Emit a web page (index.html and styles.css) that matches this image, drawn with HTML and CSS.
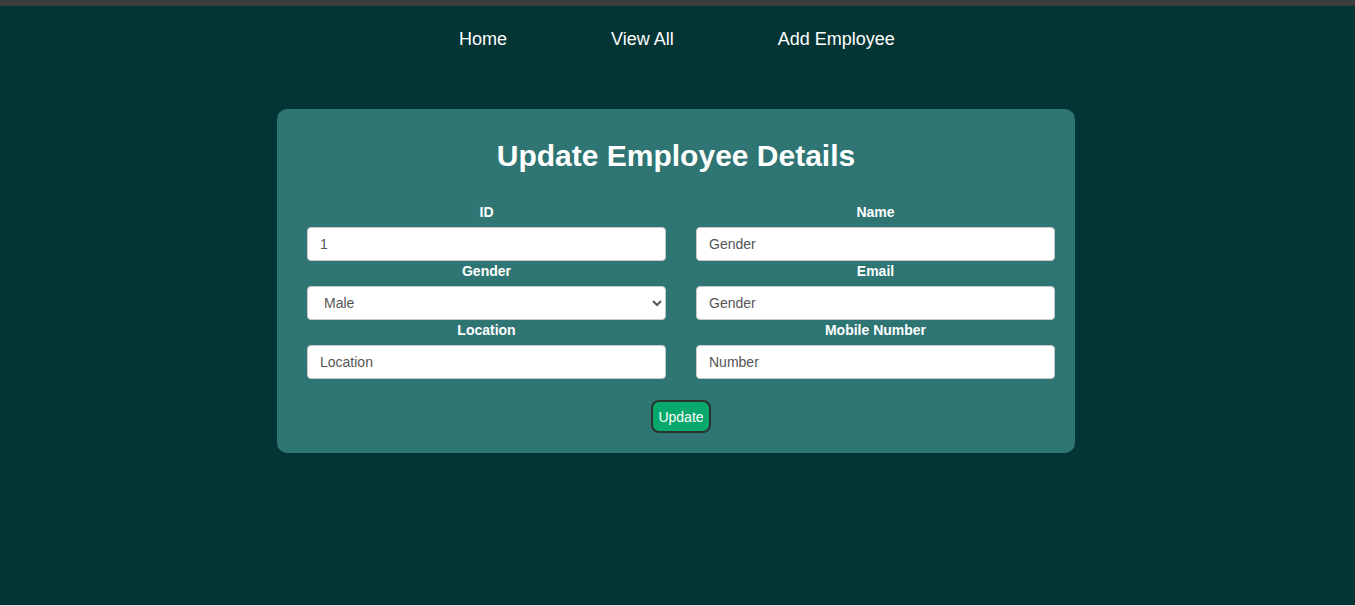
FILE: index.html
```html
<!DOCTYPE html>
<html>
<head>
<meta charset="utf-8">
<link rel="stylesheet" href="styles.css">
</head>
<body>
<div class="topbar"></div>
<div class="page">
  <nav class="nav">
    <a href="#" class="nav-link">Home</a>
    <a href="#" class="nav-link">View All</a>
    <a href="#" class="nav-link">Add Employee</a>
  </nav>
  <div class="card">
    <h2 class="title">Update Employee Details</h2>
    <form class="form">
      <div class="grid">
        <div class="field">
          <label class="label">ID</label>
          <input class="input" type="text" value="1">
        </div>
        <div class="field">
          <label class="label">Name</label>
          <input class="input" type="text" placeholder="Gender">
        </div>
        <div class="field">
          <label class="label">Gender</label>
          <select class="input select">
            <option>Male</option>
            <option>Female</option>
          </select>
        </div>
        <div class="field">
          <label class="label">Email</label>
          <input class="input" type="text" placeholder="Gender">
        </div>
        <div class="field">
          <label class="label">Location</label>
          <input class="input" type="text" placeholder="Location">
        </div>
        <div class="field">
          <label class="label">Mobile Number</label>
          <input class="input" type="text" placeholder="Number">
        </div>
      </div>
      <div class="actions">
        <button type="button" class="btn">Update</button>
      </div>
    </form>
  </div>
</div>
</body>
</html>
```
FILE: styles.css
```css
html, body {
  margin: 0;
  padding: 0;
}
body {
  background: #d9dede;
  font-family: "Liberation Sans", Arial, sans-serif;
  height: 606px;
  overflow: hidden;
}
.topbar {
  height: 6px;
  background: #3c3c3c;
}
.page {
  background: #033535;
  height: 599px;
  display: flex;
  flex-direction: column;
  align-items: center;
  padding-right: 3px;
}
.nav {
  display: flex;
  justify-content: center;
  gap: 104px;
  padding-top: 23px;
  padding-left: 2px;
}
.nav-link {
  color: #ffffff;
  text-decoration: none;
  font-size: 18px;
  line-height: 21px;
}
.card {
  margin-top: 59px;
  width: 798px;
  box-sizing: border-box;
  background: #2e7573;
  border-radius: 10px;
  padding: 29px 0 20px 0;
}
.title {
  margin: 0;
  text-align: center;
  color: #ffffff;
  font-size: 30px;
  line-height: 36px;
  font-weight: bold;
}
.form {
  margin-top: 30px;
  padding: 0 20px 0 30px;
}
.grid {
  display: grid;
  grid-template-columns: 1fr 1fr;
  column-gap: 30px;
}
.field {
  display: flex;
  flex-direction: column;
  margin-bottom: 2px;
}
.label {
  color: #ffffff;
  font-weight: bold;
  font-size: 14px;
  line-height: 16px;
  text-align: center;
  margin-bottom: 7px;
}
.input {
  height: 34px;
  box-sizing: border-box;
  border: 1px solid #c8c8c8;
  border-radius: 4px;
  background: #ffffff;
  padding: 0 12px;
  font-family: "Liberation Sans", Arial, sans-serif;
  font-size: 14px;
  color: #555555;
  margin: 0;
}
.input::placeholder {
  color: #555555;
  opacity: 1;
}
.select {
  padding: 0 12px;
}
.actions {
  display: flex;
  justify-content: center;
  margin-top: 19px;
}
.btn {
  background: #06a86b;
  color: #ffffff;
  border: 2px solid #2b3331;
  border-radius: 8px;
  font-family: "Liberation Sans", Arial, sans-serif;
  font-size: 14px;
  height: 33px;
  padding: 0 5px;
}
```
